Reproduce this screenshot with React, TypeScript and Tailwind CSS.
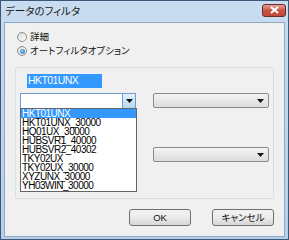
const items = [
  'HKT01UNX',
  'HKT01UNX_30000',
  'HQ01UX_30000',
  'HUBSVR1_40000',
  'HUBSVR2_40302',
  'TKY02UX',
  'TKY02UX_30000',
  'XYZUNX_30000',
  'YH03WIN_30000',
]

const jp = "font-['Noto_Sans_CJK_JP',sans-serif] [font-feature-settings:'palt']"
const latin = "font-['Liberation_Sans',Arial,sans-serif]"

function Arrow() {
  return (
    <svg width="7" height="4" viewBox="0 0 7 4">
      <path d="M0 0h7L3.5 4z" fill="#111" />
    </svg>
  )
}

function Radio({ checked, label }: { checked?: boolean; label: string }) {
  return (
    <div className="flex h-[14px] items-center">
      <span className="flex h-[10px] w-[10px] items-center justify-center rounded-full border border-[#8f8f8f] bg-gradient-to-br from-[#dcdcdc] to-[#fbfbfb]">
        {checked && <span className="h-[5px] w-[5px] rounded-full bg-[radial-gradient(circle_at_40%_40%,#8ad0f5,#1f63b0)]" />}
      </span>
      <span className={`ml-[3px] text-[9.5px] leading-none text-[#111] ${jp}`}>{label}</span>
    </div>
  )
}

function GrayCombo() {
  return (
    <div className="flex h-[15px] w-[116px] items-center justify-end rounded-[2px] border border-[#8a8a8a] bg-gradient-to-b from-[#f3f3f3] to-[#dcdcdc] pr-[4px]">
      <Arrow />
    </div>
  )
}

export default function App() {
  return (
    <div className="flex h-[240px] w-[289px] flex-col border border-[#3c5877] bg-gradient-to-b from-[#c9dcf0] to-[#b6cfe9]">
      {/* Title bar */}
      <div className="flex h-[21px] items-center justify-between pl-[4px] pr-[2px]">
        <span className={`text-[10.5px] leading-none text-[#1b1b1b] ${jp}`}>データのフィルタ</span>
        <div className="mb-[3px] flex h-[13px] w-[24px] items-center justify-center rounded-[3px] border border-[#6e2a24] bg-gradient-to-b from-[#e5a398] via-[#c85343] to-[#c2493a]">
          <svg width="9" height="8" viewBox="0 0 9 8">
            <path d="M1 1l7 6M8 1L1 7" stroke="#fff" strokeWidth="2" />
          </svg>
        </div>
      </div>

      {/* Client area */}
      <div className="mx-[3px] mb-[2px] flex flex-1 flex-col border border-[#8fa8c4] bg-[#f0f0f0]">
        <div className="flex flex-col pl-[12px] pt-[7px]">
          <Radio label="詳細" />
          <Radio checked label="オートフィルタオプション" />
        </div>

        {/* Group box */}
        <div className="ml-[10px] mr-[10px] mt-[9px] flex h-[132px] flex-col rounded-[2px] border border-[#d5dfe5] pl-[4px] pr-[2px] pt-[6px]">
          <div className={`ml-[7px] flex h-[14px] w-[75px] items-center bg-[#3399ff] pl-[1px] text-[10.5px] tracking-[-0.6px] text-white ${latin}`}>
            HKT01UNX
          </div>
          <div className="mt-[5px] flex">
            <div className="relative">
              <div className="flex h-[16px] w-[116px] items-stretch border border-[#6f9ad0] bg-white">
                <div className="flex-1" />
                <div className="flex w-[13px] items-center justify-center border-l border-[#6f9ad0] bg-gradient-to-b from-[#e4f1fb] to-[#b6d8f2]">
                  <Arrow />
                </div>
              </div>
              {/* Open drop-down list */}
              <div className={`absolute left-0 top-[15px] z-10 flex w-[117px] flex-col border border-[#646464] bg-white pb-[1px] text-[10px] tracking-[-0.5px] text-black ${latin}`}>
                {items.map((it, i) => (
                  <div
                    key={it}
                    className={`flex h-[9px] items-center pl-[1px] leading-[9px] ${i === 0 ? 'bg-[#3399ff] text-white' : ''}`}
                  >
                    {it}
                  </div>
                ))}
              </div>
            </div>
            <div className="ml-[17px] flex flex-col">
              <GrayCombo />
              <div className="mt-[39px]">
                <GrayCombo />
              </div>
            </div>
          </div>
        </div>

        {/* Buttons */}
        <div className="mt-[10px] flex justify-end gap-[21px] pr-[10px]">
          <button className={`h-[17px] w-[62px] rounded-[3px] border border-[#707070] bg-gradient-to-b from-[#f2f2f2] via-[#ebebeb] to-[#d6d6d6] text-[9.5px] leading-none text-[#111] ${latin}`}>
            OK
          </button>
          <button className={`h-[17px] w-[62px] rounded-[3px] border border-[#707070] bg-gradient-to-b from-[#f2f2f2] via-[#ebebeb] to-[#d6d6d6] text-[9.5px] leading-none text-[#111] ${jp}`}>
            キャンセル
          </button>
        </div>
      </div>
    </div>
  )
}
